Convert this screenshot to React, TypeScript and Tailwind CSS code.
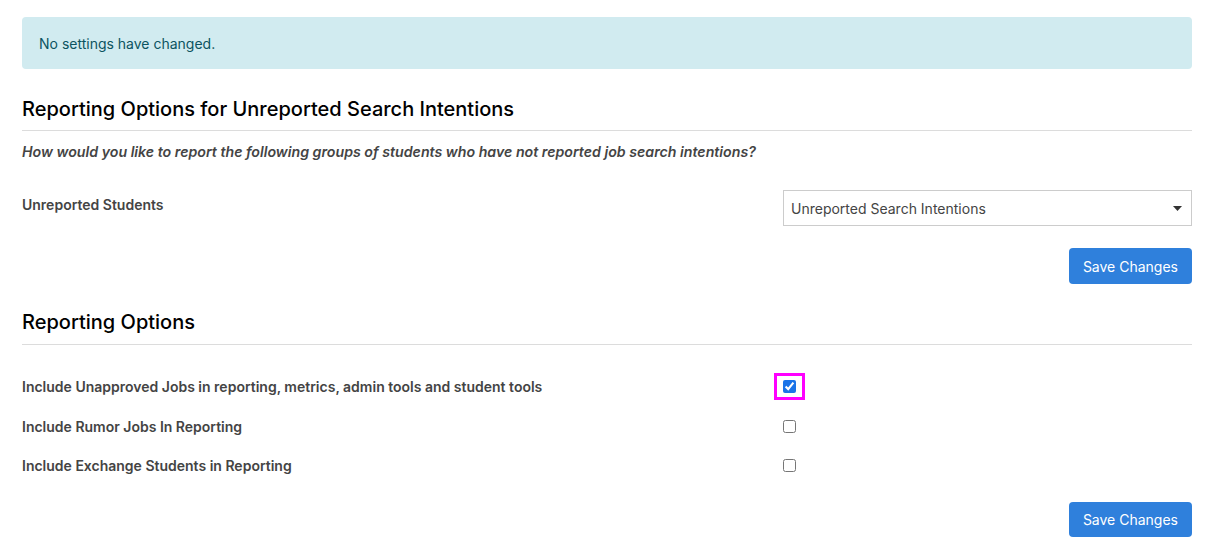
export default function App() {
  return (
    <div className="min-h-screen bg-white pl-[22px] pr-[21px] pt-[17px] text-[14px] text-[#444]" style={{ fontFamily: 'Inter, "Liberation Sans", sans-serif' }}>
      <div className="flex h-[52px] items-center rounded-[4px] bg-[#d1ebf0] px-[17px] text-[#0c5460]">
        No settings have changed.
      </div>

      {/* Unreported search intentions */}
      <h2 className="mt-[26px] pb-[7px] text-[20px] leading-[28px] font-medium text-black">
        Reporting Options for Unreported Search Intentions
      </h2>
      <div className="border-t border-[#dcdcdc]" />
      <p className="mt-[11px] text-[14.2px] leading-[20px] font-semibold italic text-[#444]">
        How would you like to report the following groups of students who have not reported job search intentions?
      </p>

      <div className="mt-[28px] flex">
        <div className="w-[761px] pt-[5px] leading-[20px] font-semibold">Unreported Students</div>
        <div className="relative flex-1">
          <select className="h-[36px] w-full appearance-none border border-[#ccc] bg-white px-[7px] text-[14px] text-[#444]">
            <option>Unreported Search Intentions</option>
          </select>
          <svg className="pointer-events-none absolute right-[10px] top-[16px]" width="9" height="5" viewBox="0 0 9 5">
            <path d="M0 0h9L4.5 5z" fill="#333" />
          </svg>
        </div>
      </div>

      <div className="mt-[22px] flex justify-end">
        <button className="h-[36px] rounded-[4px] bg-[#2f80dc] px-[14px] text-[14px] text-white">Save Changes</button>
      </div>

      {/* Reporting options */}
      <h2 className="mt-[24px] pb-[8px] text-[20px] leading-[28px] font-medium text-black">Reporting Options</h2>
      <div className="border-t border-[#dcdcdc]" />

      <div className="mt-[22px] flex flex-col">
        {[
          { label: 'Include Unapproved Jobs in reporting, metrics, admin tools and student tools', checked: true },
          { label: 'Include Rumor Jobs In Reporting', checked: false },
          { label: 'Include Exchange Students in Reporting', checked: false },
        ].map((row, i) => (
          <div key={i} className="flex h-[39.5px] items-center">
            <div className="w-[761px] font-semibold">{row.label}</div>
            <div className="flex items-center">
              {row.checked ? (
                <span className="-mx-[9px] -my-[7px] flex items-center border-[3px] border-[#ff00ff] px-[6px] py-[4px]">
                  <input type="checkbox" defaultChecked className="m-0 block h-[13px] w-[13px] accent-[#1a73e8]" />
                </span>
              ) : (
                <input type="checkbox" className="m-0 block h-[13px] w-[13px]" />
              )}
            </div>
          </div>
        ))}
      </div>

      <div className="mt-[16px] flex justify-end">
        <button className="h-[35px] rounded-[4px] bg-[#2f80dc] px-[14px] text-[14px] text-white">Save Changes</button>
      </div>
    </div>
  )
}
